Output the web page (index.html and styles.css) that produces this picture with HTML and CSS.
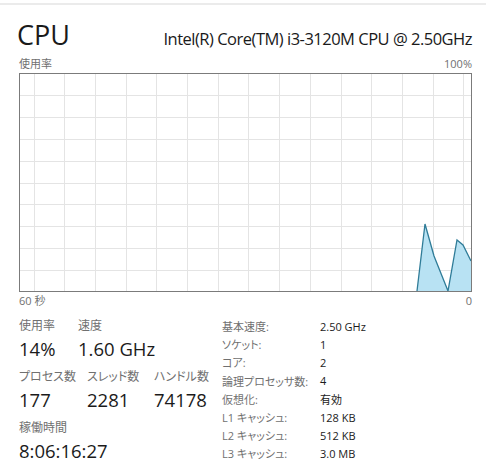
FILE: index.html
```html
<!DOCTYPE html>
<html lang="ja">
<head>
<meta charset="utf-8">
<link rel="stylesheet" href="styles.css">
</head>
<body>
<div class="topline"></div>
<div class="page">
  <div class="header">
    <div class="title">CPU</div>
    <div class="model">Intel(R) Core(TM) i3-3120M CPU @ 2.50GHz</div>
  </div>
  <div class="axis axis-top"><span>使用率</span><span>100%</span></div>
  <div class="chart">
    <svg width="453" height="219" viewBox="0 0 453 219">
      <g stroke="#e4e4e4" stroke-width="1">
        <line x1="15.5" y1="0" x2="15.5" y2="219"/>
        <line x1="45.5" y1="0" x2="45.5" y2="219"/>
        <line x1="76.5" y1="0" x2="76.5" y2="219"/>
        <line x1="107.5" y1="0" x2="107.5" y2="219"/>
        <line x1="137.5" y1="0" x2="137.5" y2="219"/>
        <line x1="168.5" y1="0" x2="168.5" y2="219"/>
        <line x1="199.5" y1="0" x2="199.5" y2="219"/>
        <line x1="229.5" y1="0" x2="229.5" y2="219"/>
        <line x1="260.5" y1="0" x2="260.5" y2="219"/>
        <line x1="291.5" y1="0" x2="291.5" y2="219"/>
        <line x1="322.5" y1="0" x2="322.5" y2="219"/>
        <line x1="352.5" y1="0" x2="352.5" y2="219"/>
        <line x1="383.5" y1="0" x2="383.5" y2="219"/>
        <line x1="414.5" y1="0" x2="414.5" y2="219"/>
        <line x1="444.5" y1="0" x2="444.5" y2="219"/>
        <line x1="0" y1="22.5" x2="453" y2="22.5"/>
        <line x1="0" y1="44.5" x2="453" y2="44.5"/>
        <line x1="0" y1="66.5" x2="453" y2="66.5"/>
        <line x1="0" y1="88.5" x2="453" y2="88.5"/>
        <line x1="0" y1="110.5" x2="453" y2="110.5"/>
        <line x1="0" y1="131.5" x2="453" y2="131.5"/>
        <line x1="0" y1="153.5" x2="453" y2="153.5"/>
        <line x1="0" y1="175.5" x2="453" y2="175.5"/>
        <line x1="0" y1="197.5" x2="453" y2="197.5"/>
      </g>
      <polygon points="398,218 406,151 415,183 429,218 438,167 444,172 452,188 452,218" fill="#b8e2f3" stroke="none"/>
      <polyline points="398,218 406,151 415,183 429,218 438,167 444,172 452,188" fill="none" stroke="#2f7c98" stroke-width="1.3"/>
      <rect x="0.5" y="0.5" width="452" height="218" fill="none" stroke="#7b7b7b" stroke-width="1"/>
    </svg>
  </div>
  <div class="axis axis-bottom"><span>60 秒</span><span>0</span></div>
  <div class="stats">
    <div class="left">
      <div class="row">
        <div class="stat w59"><div class="lbl">使用率</div><div class="val">14%</div></div>
        <div class="stat"><div class="lbl">速度</div><div class="val">1.60 GHz</div></div>
      </div>
      <div class="row">
        <div class="stat w68"><div class="lbl">プロセス数</div><div class="val">177</div></div>
        <div class="stat w67"><div class="lbl">スレッド数</div><div class="val">2281</div></div>
        <div class="stat"><div class="lbl">ハンドル数</div><div class="val">74178</div></div>
      </div>
      <div class="row">
        <div class="stat"><div class="lbl">稼働時間</div><div class="val">8:06:16:27</div></div>
      </div>
    </div>
    <div class="right">
      <div class="k">基本速度:</div><div class="v">2.50 GHz</div>
      <div class="k">ソケット:</div><div class="v">1</div>
      <div class="k">コア:</div><div class="v">2</div>
      <div class="k">論理プロセッサ数:</div><div class="v">4</div>
      <div class="k">仮想化:</div><div class="v">有効</div>
      <div class="k">L1 キャッシュ:</div><div class="v">128 KB</div>
      <div class="k">L2 キャッシュ:</div><div class="v">512 KB</div>
      <div class="k">L3 キャッシュ:</div><div class="v">3.0 MB</div>
    </div>
  </div>
</div>
</body>
</html>
```

FILE: styles.css
```css
html, body {
  margin: 0;
  padding: 0;
  background: #ffffff;
}
body {
  font-family: "Open Sans", "Noto Sans CJK JP", sans-serif;
  font-feature-settings: "palt";
  color: #1b1b1b;
  width: 488px;
  height: 476px;
  overflow: hidden;
}
.topline {
  height: 2px;
  margin-top: 3px;
  width: 486px;
  background: #ebebeb;
}
.page {
  padding-left: 19px;
  width: 453px;
}
.header {
  display: flex;
  justify-content: space-between;
  align-items: baseline;
  margin-top: 14px;
  height: 36px;
}
.title {
  font-size: 27px;
  line-height: 32px;
  margin-left: -2px;
  color: #1a1a1a;
}
.model {
  font-size: 16.5px;
  line-height: 24px;
  letter-spacing: -0.5px;
  color: #1a1a1a;
}
.axis {
  display: flex;
  justify-content: space-between;
  font-size: 11px;
  line-height: 14px;
  color: #707070;
}
.axis-top {
  height: 18px;
  align-items: center;
}
.axis-bottom {
  height: 18px;
  align-items: center;
}
.chart {
  width: 453px;
  height: 219px;
}
.chart svg {
  display: block;
}
.stats {
  display: flex;
  margin-top: 7px;
}
.left {
  width: 203px;
  display: flex;
  flex-direction: column;
}
.row {
  display: flex;
}
.stat {
  display: flex;
  flex-direction: column;
}
.w59 { width: 59px; }
.w68 { width: 68px; }
.w67 { width: 67px; }
.lbl {
  font-size: 12px;
  line-height: 18px;
  color: #707070;
}
.val {
  font-size: 18.5px;
  line-height: 38px;
  color: #1b1b1b;
  margin-top: -5px;
}
.right {
  display: grid;
  grid-template-columns: 98px auto;
  grid-auto-rows: 18.2px;
  align-items: center;
  font-size: 11px;
}
.k {
  color: #707070;
}
.v {
  color: #1b1b1b;
}
```
